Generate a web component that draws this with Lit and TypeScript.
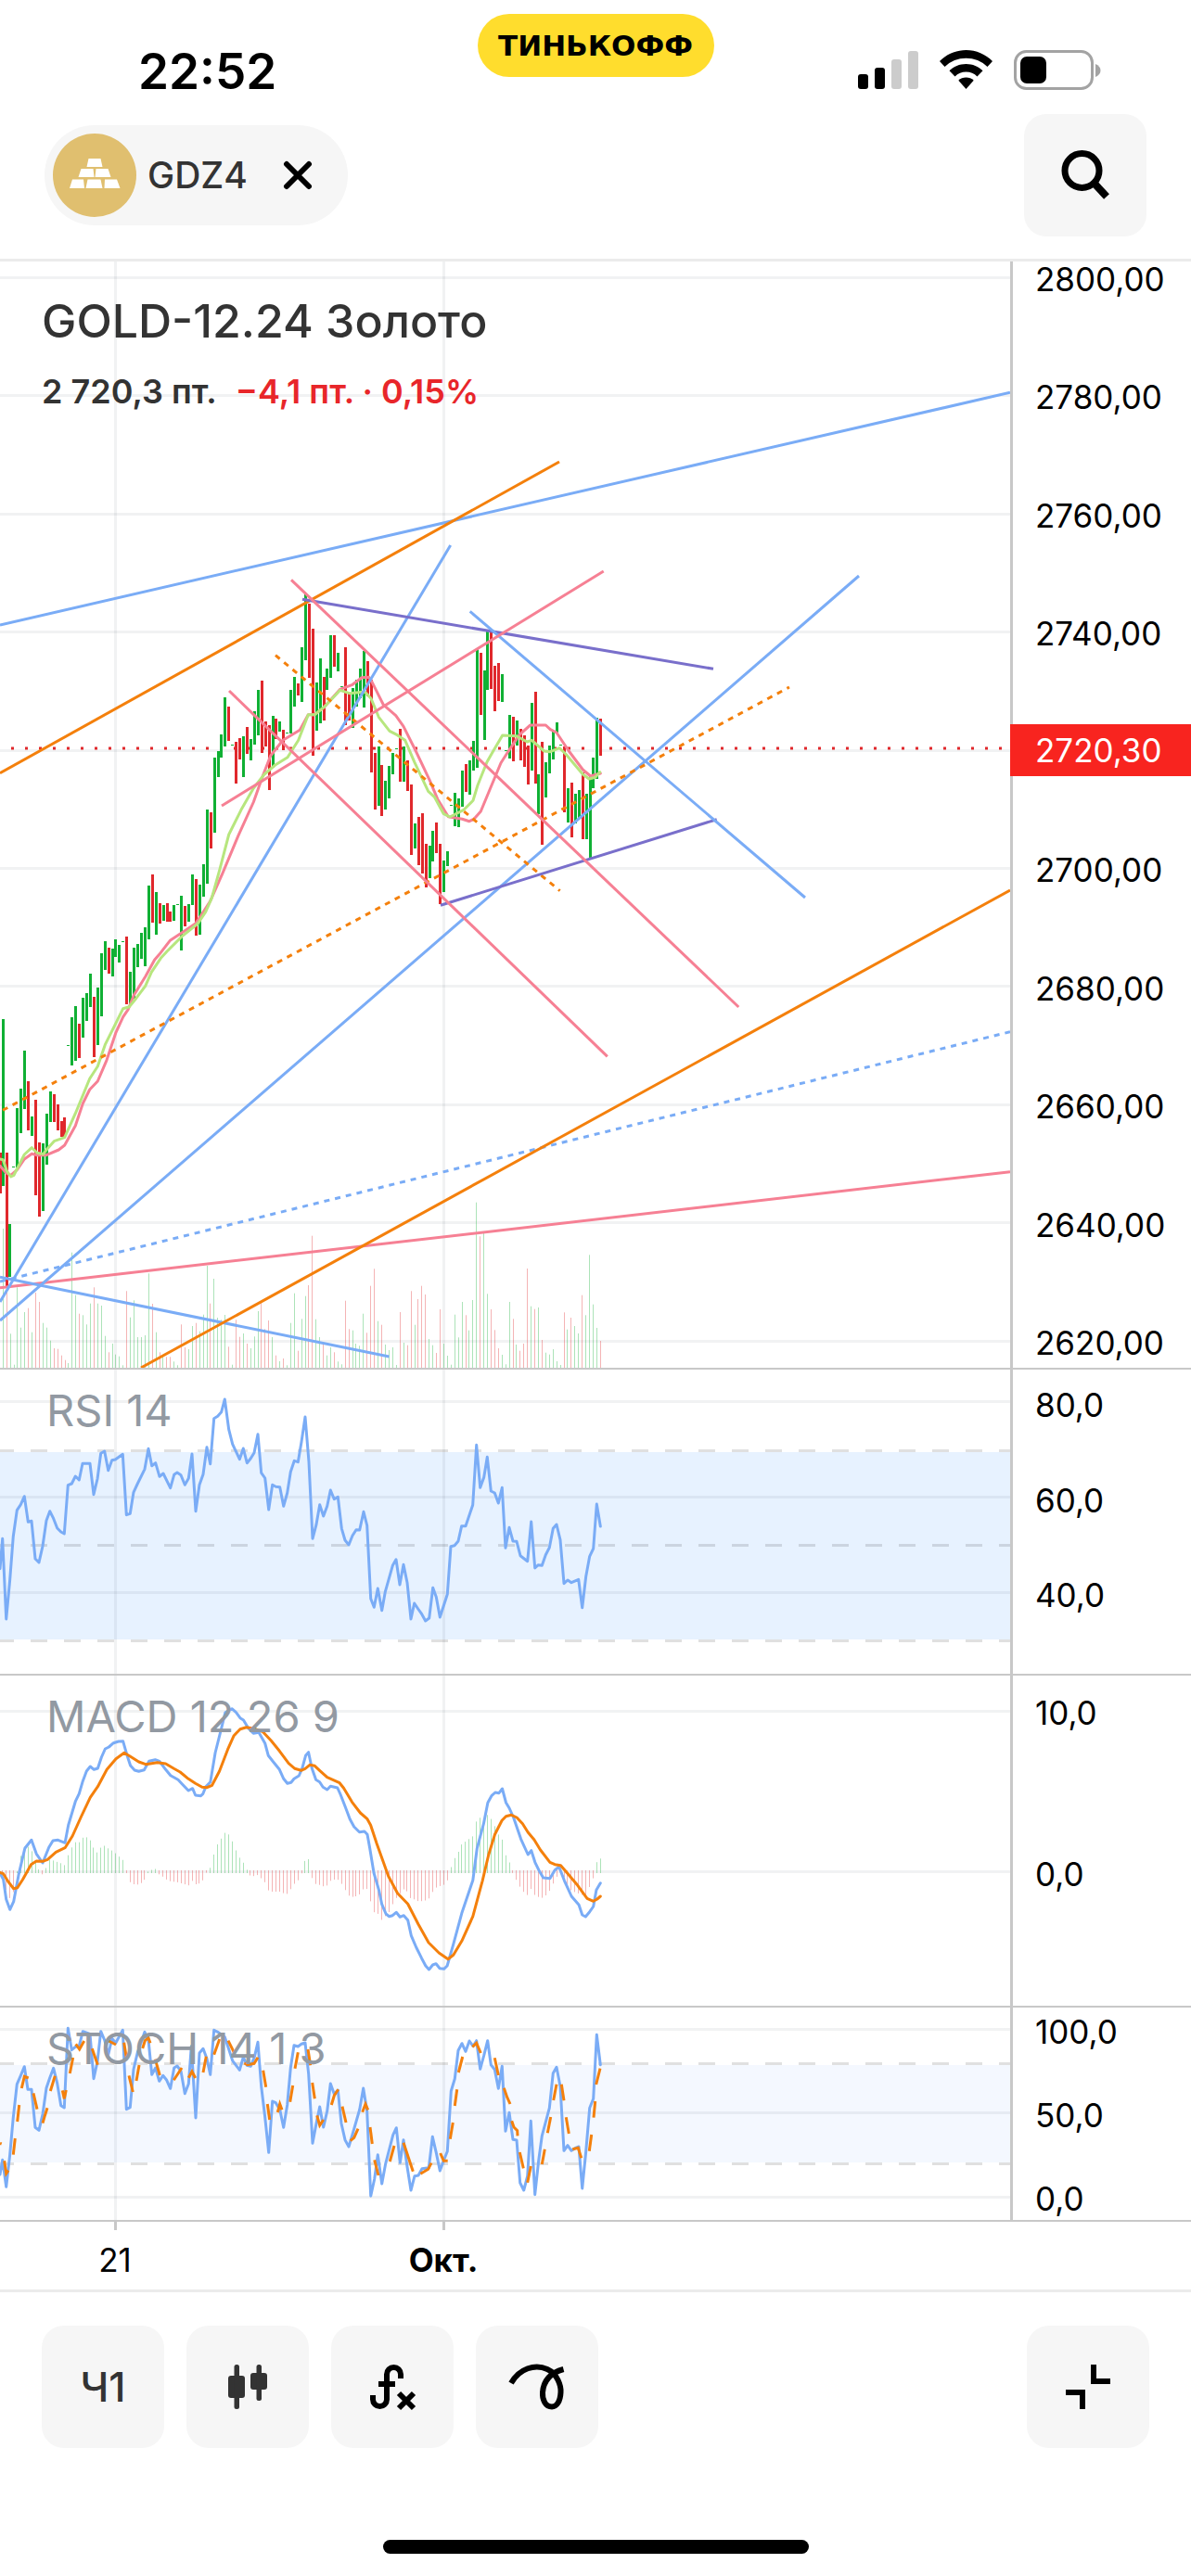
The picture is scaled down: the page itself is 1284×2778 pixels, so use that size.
import { LitElement, html, svg, css } from "lit";
import { customElement } from "lit/decorators.js";

/** Maps digitised samples of a chart section to plot coordinates. */
interface Frame {
  x: number;
  y: number;
  kx: number;
  ky: number;
}

const T = 1 / 3;
const PRICE_LOW: Frame = { x: 0, y: 1020, kx: T, ky: T };
const PRICE_LEFT: Frame = { x: 0, y: 580, kx: T, ky: T };
const PRICE_RIGHT: Frame = { x: 400, y: 580, kx: T, ky: T };
const RSI_LEFT: Frame = { x: 0, y: 1470, kx: T, ky: T };
const RSI_RIGHT: Frame = { x: 380, y: 1470, kx: T, ky: T };
const MACD: Frame = { x: 0, y: 1800, kx: 1 / 2.24, ky: T };
const STOCH_LEFT: Frame = { x: 0, y: 2150, kx: T, ky: T };
const STOCH_RIGHT: Frame = { x: 330, y: 2150, kx: T, ky: T };

/** Centre of the pixel column that holds x, so that thin bars stay crisp. */
const column = (x: number): number => Math.round(x - 0.5) + 0.5;

const points = (data: string, f: Frame): string =>
  data
    .trim()
    .split(/[\s,]+/)
    .map(Number)
    .reduce<string[]>((out, v, i, all) => {
      if (i % 2) {
        const x = f.x + all[i - 1] * f.kx;
        const y = f.y + v * f.ky;
        out.push(`${x.toFixed(1)},${y.toFixed(1)}`);
      }
      return out;
    }, [])
    .join(" ");

/** Each candle is "u|d|t x high low"; t is a flat tick with no range. */
const CANDLES: [Frame, string][] = [
  [
    PRICE_LOW,
    `d 0 668 800,u 10 236 776,d 22 668 1100,u 31 900 1071,t 43 715,u 55 525 718,u 67 462 607,u 79 338 527,
    d 91 438 597,u 103 551 616,d 115 498 806,d 127 636 875,u 139 640 857,u 151 543 707,u 163 471 570,d 175 480 570,
    d 187 513 597,d 199 566 617,d 208 555 617,t 220 322,u 232 230 386,u 244 194 371,d 256 251 362,u 268 168 296,
    u 280 152 242,u 292 90 197,d 304 165 359,u 316 135 320,u 328 25 227,u 340 -16 79,d 352 5 90,u 364 10 100,
    u 373 -22 35,u 385 -2 55,t 397 -15,d 409 -31 190,u 421 84 190,u 433 5 170,u 445 -6 70,u 457 -43 42,u 469 -61 65`,
  ],
  [
    PRICE_LEFT,
    `u 481 1124 1298,d 493 1090 1244,u 505 1145 1285,d 517 1181 1248,u 529 1187 1238,d 541 1181 1242,d 550 1208 1242,
    u 562 1187 1238,t 574 1186,u 586 1157 1334,d 598 1190 1258,u 610 1184 1242,u 622 1088 1187,d 634 1103 1286,
    u 646 1121 1285,u 658 1055 1162,u 670 878 1120,d 682 887 1006,u 694 710 955,u 706 689 774,u 715 635 711,
    u 727 517 675,d 739 545 658,t 751 668,d 763 661 796,d 775 647 717,u 787 643 774,d 799 613 699,u 811 652 720,
    u 823 560 670,u 835 493 640,d 847 463 696,d 859 593 676,d 871 605 816,u 883 577 745,d 892 584 650,u 904 593 627,
    d 916 620 687,t 928 629,u 940 493 633,u 952 449 546,d 964 472 511,u 976 355 531,u 988 182 396,d 1000 213 454,
    d 1012 295 705,u 1024 467 625,u 1036 389 601,d 1048 451 592,u 1057 424 492,u 1069 316 454,d 1081 316 417,
    u 1093 373 432,t 1105 480,d 1117 355 606,d 1129 505 590,u 1141 485 614,u 1153 460 545,u 1165 424 520,
    u 1177 365 549,d 1189 398 513,d 1201 460 759,d 1213 697 880,u 1225 675 868,d 1234 735 900,u 1246 785 880,
    u 1258 738 844`,
  ],
  [
    PRICE_RIGHT,
    `u 70 695 765,t 82 681,d 94 617 790,u 106 675 790,d 118 719 820,d 130 798 1026,u 142 923 1006,d 154 902 1060,
    d 166 890 1087,d 178 989 1132,u 190 997 1102,u 199 947 1047,d 211 920 1020,d 223 989 1185,u 235 1043 1145,
    u 247 1013 1063,t 259 864,u 271 826 934,u 283 842 937,u 295 752 870,d 307 731 823,u 319 719 832,u 331 656 754,
    u 343 357 745,d 355 373 572,u 367 430 655,u 376 300 492,d 388 304 490,d 400 415 562,d 412 406 529,u 424 442 532,
    t 436 686,u 448 572 713,d 460 580 724,u 472 590 672,d 484 619 720,d 496 640 741,d 508 671 799,u 520 535 754,
    d 532 499 796,u 541 765 895,d 553 661 992,u 565 725 841,u 577 671 763,u 589 628 717,u 601 596 632,t 613 669,
    d 625 675 889,u 637 809 922,d 649 791 970,u 661 827 925,u 673 815 910,d 685 760 974,u 697 829 974,u 709 770 1037,
    u 718 710 810,u 730 581 781,d 742 584 706`,
  ],
];

const candlePath = (kind: string): string =>
  CANDLES.map(([f, data]) =>
    data
      .split(",")
      .map((row) => row.trim().split(" "))
      .filter((row) => row[0] === kind)
      .map(([, x, a, b]) => {
        const px = column(f.x + Number(x) * f.kx);
        const top = Math.round(f.y + Number(a) * f.ky);
        if (kind === "t") return `M${px} ${top + 0.5}m-1.5 0h3`;
        return `M${px} ${top}V${Math.round(f.y + Number(b) * f.ky)}`;
      })
      .join("")
  ).join("");

/** Volume bar tops, positive for rising hours and negative for falling ones. */
const VOLUME: [number, number, number[]][] = [
  [
    3.3,
    419.3,
    [
      915, -1100, 1255, 1355, 1105, 1235, 1185, -1172, 1250, -1122, -1152, 1220, 1235, 1277, -1302, -1304, -1325,
      -1340, 1350, 992, 1130, -1190, 1195, 1225, 1157, -1105, 1157, 1164, 1262, -1315, 1287, 1322, 1328, 1357, -1117,
      1202, 1147, 1266, 1266, 1260, 1060, -1158, 1250, -1315, 1328, -1330, -1330, 1345, 1357, -1225, -1299, 1305,
      1230, -1220, 1247, 1193, 1035, -1157, 1077, 1203, 1210, 1194, -1297, 1355, -1210, -1265, 1254, -1287, 1302,
      1264, 1182, -1155, -1240, -1212, 1266, -1325, 1344, -1335, 1357, 1220, 1124, -1310, 1207, 1133, -1098, -938,
      1208, 1266, -1290, 1325, 1299, -1315, 1345, 1354, -1148, -1240, 1244, 1287, 1294, 1190, -1252, -1100, -1045,
      1214, -1226, 1290, 1308,
    ],
  ],
  [
    423.5,
    647.3,
    [
      1299, 1356, -1185, 1284, -1292, -1117, 1226, -1143, -1100, -1128, 1272, 1292, -1317, -1176, 1287, 1326, 1355,
      1193, 1267, 1152, -1195, 1244, 1146, 830, -940, 930, 1126, -1176, -1243, -1302, 1323, 1354, 1152, -1207, 1290,
      -1310, -1287, -1044, 1166, -1175, 1170, -1275, 1316, 1322, 1305, 1344, 1356, -1186, 1241, -1203, 1230, 1254,
      -1130, 1195, 1000, 1160, 1236, -1278,
    ],
  ],
];

const volumePath = (sign: number): string =>
  VOLUME.map(([from, to, tops]) =>
    tops
      .map((v, i) => {
        if (Math.sign(v) !== sign) return "";
        const x = from + ((to - from) * i) / (tops.length - 1);
        return `M${column(x)} 1475V${(1020 + Math.abs(v) / 3).toFixed(1)}`;
      })
      .join("")
  ).join("");

/** Histogram envelope around the zero line. */
const HISTOGRAM = `5 670,15 715,24 742,33 720,41 655,45 640,52 590,60 572,68 575,77 590,86 630,95 650,104 666,113 640,122 612,
  130 620,147 628,157 635,165 600,174 575,182 560,192 560,200 545,210 544,218 555,227 580,236 595,245 575,254 571,263 582,
  272 588,280 597,288 607,297 618,306 663,315 692,325 697,335 697,345 688,352 678,360 648,370 650,378 645,386 668,397 673,
  405 685,430 690,456 700,465 683,475 700,485 690,493 680,501 652,510 640,518 592,527 562,535 547,544 528,552 535,561 558,
  570 588,579 612,588 628,597 652,605 668,615 670,625 665,633 680,642 692,650 720,680 720,690 732,700 715,710 695,720 682,
  729 658,738 615,746 615,755 680,763 695,772 698,780 703,790 700,800 682,815 680,825 695,835 718,845 738,860 735,870 728,
  880 708,888 712,896 755,905 790,915 792,922 812,930 800,940 785,950 755,958 738,966 725,975 712,985 720,993 743,1002 745,
  1012 752,1030 748,1038 740,1046 718,1055 705,1073 697,1082 680,1090 635,1100 605,1108 588,1117 563,1126 557,1135 548,
  1143 540,1152 485,1161 480,1170 485,1178 470,1187 487,1196 512,1205 540,1213 553,1222 608,1231 628,1240 665,1249 685,
  1258 708,1266 722,1275 732,1284 708,1293 735,1310 740,1320 730,1328 715,1337 690,1345 670,1354 658,1363 675,1372 700,
  1381 718,1390 722,1415 735,1425 700,1433 675,1441 625,1450 613`
  .split(",")
  .map((p) => p.trim().split(" ").map(Number));

const histogramPath = (rising: boolean): string => {
  let d = "";
  let k = 0;
  for (let i = 0; i < 165; i++) {
    const x = 6 + i * 8.805;
    while (k < HISTOGRAM.length - 2 && HISTOGRAM[k + 1][0] < x) k++;
    const [xa, ya] = HISTOGRAM[k];
    const [xb, yb] = HISTOGRAM[k + 1];
    const y = ya + ((yb - ya) * (x - xa)) / (xb - xa);
    if (y < 656 !== rising) continue;
    d += `M${column(x / 2.24)} ${rising ? 2020 : 2017}V${(1800 + y / 3).toFixed(1)}`;
  }
  return d;
};

const SLOW_AVERAGE = [
  points(
    `0 712,20 735,35 742,55 725,79 690,103 673,120 677,150 677,190 660,209 645,244 582,268 510,290 465,316 438,345 370,
    375 280,398 230,415 205,433 160,470 100,500 45`,
    PRICE_LOW
  ),
  points(
    `515 1348,550 1303,600 1270,632 1248,650 1222,680 1175,720 1085,770 965,820 855,850 770,875 705,915 655,970 622,
    997 572,1018 572,1048 548,1100 490,1140 475,1170 452,1193 451,1200 460,1215 490,1240 540,1280 575`,
    PRICE_LEFT
  ),
  points(
    `105 610,145 690,190 785,215 845,250 902,295 910,318 917,333 910,355 885,420 728,440 697,480 637,515 606,565 606,
    580 620,600 630,640 690,685 750,710 771,742 762`,
    PRICE_RIGHT
  ),
].join(" ");

const FAST_AVERAGE = [
  points(
    `0 690,10 692,22 728,35 747,45 742,79 675,103 653,120 670,140 674,150 660,175 632,209 620,244 542,290 430,316 390,
    340 320,370 260,398 203,418 197,440 170,470 130,490 85,520 40`,
    PRICE_LOW
  ),
  points(
    `540 1338,590 1288,640 1248,665 1210,685 1165,710 1075,740 960,780 880,820 810,855 765,890 735,930 710,965 655,
    997 572,1018 572,1048 548,1100 493,1130 503,1180 498,1200 520,1225 580,1260 625`,
    PRICE_LEFT
  ),
  points(
    `85 638,110 655,140 725,185 820,205 838,235 893,255 903,300 880,330 850,345 800,375 725,395 690,425 639,470 641,
    505 660,520 655,560 690,580 692,610 680,630 700,685 765,705 780,725 775,740 758`,
    PRICE_RIGHT
  ),
].join(" ");

const RSI_LINE = [
  points(
    `0 665,8 568,20 828,32 700,43 560,55 476,67 458,79 431,91 514,102 511,114 633,126 645,138 592,150 509,161 479,
    173 503,185 534,197 546,208 552,220 395,232 390,244 366,256 378,267 325,291 325,303 425,315 375,326 292,338 285,
    350 347,362 314,373 312,397 295,409 491,421 487,432 418,445 390,468 343,480 277,491 332,503 323,516 367,528 357,
    551 404,563 361,573 354,585 362,598 394,610 373,621 294,633 479,645 394,657 360,669 272,680 326,692 179,704 172,
    716 158,727 117,740 215,752 262,775 311,787 276,799 323,811 308,822 290,834 230,845 355,857 372,869 474,881 394,
    892 400,905 401,917 463,929 420,940 352,952 316,964 320,975 255,987 174,999 320,1011 568,1023 522,1034 458,
    1046 495,1058 463,1069 411,1081 440,1093 433,1105 535,1116 573,1128 588,1140 558,1152 539,1163 540,1176 481,
    1187 525,1199 762`,
    RSI_LEFT
  ),
  points(
    `70 790,82 729,95 800,106 740,130 655,141 635,153 717,165 652,177 710,189 828,200 777,212 795,224 812,236 834,
    248 825,260 727,271 757,283 822,307 748,318 593,330 590,342 576,353 527,366 527,389 459,401 265,413 403,425 370,
    436 304,448 414,460 420,472 453,484 403,495 598,507 532,519 576,531 577,543 623,566 641,578 513,590 663,601 653,
    613 655,625 620,637 597,649 535,660 522,672 572,684 713,696 702,708 710,731 700,743 791,755 690,767 625,779 600,
    790 456,802 528`,
    RSI_RIGHT
  ),
].join(" ");

const MACD_LINE = points(
  `0 660,8 680,15 745,24 778,33 752,45 665,60 580,76 553,88 598,103 627,118 577,128 555,140 553,157 562,165 505,182 428,
  191 403,200 362,209 330,218 315,227 325,236 321,245 285,254 258,263 252,274 239,286 234,297 233,306 275,315 312,
  325 327,335 331,348 326,360 298,375 293,385 298,400 325,412 344,430 358,440 372,455 393,465 386,472 408,485 410,
  490 404,497 380,508 365,520 270,535 190,544 140,560 128,570 140,580 158,588 165,600 192,612 208,625 205,640 240,
  648 280,660 300,675 325,685 355,694 370,703 367,710 355,722 345,730 320,738 280,745 269,753 320,763 358,772 365,
  780 382,790 390,798 379,815 384,822 405,835 450,845 485,855 510,868 527,880 525,887 535,893 580,903 660,915 715,
  922 760,932 792,940 800,948 797,957 787,966 802,975 797,985 812,993 862,1005 900,1018 935,1028 960,1036 972,1045 957,
  1053 953,1062 968,1072 970,1080 960,1095 890,1115 790,1142 683,1152 580,1168 500,1178 432,1187 410,1196 399,1205 401,
  1213 387,1222 432,1230 450,1240 480,1258 550,1275 600,1283 587,1292 625,1303 655,1312 675,1328 677,1340 650,1350 640,
  1363 685,1380 735,1398 763,1406 795,1414 801,1424 785,1433 768,1440 715,1450 692`,
  MACD
);

const SIGNAL_LINE = points(
  `0 658,8 662,20 688,33 710,42 707,55 680,75 632,88 621,103 622,115 616,135 592,157 578,175 540,195 480,218 415,236 380,
  258 325,280 290,300 271,315 283,335 300,352 308,380 302,400 306,420 322,435 333,455 355,472 370,488 382,500 383,
  512 376,530 330,550 260,565 215,580 194,595 188,615 193,635 203,655 232,675 265,697 305,712 322,727 328,737 322,
  748 310,760 313,772 328,790 350,820 368,830 385,850 430,870 465,887 485,895 505,910 565,938 670,960 725,985 760,
  1010 825,1035 885,1060 918,1082 938,1095 925,1115 880,1142 800,1165 685,1180 600,1195 535,1212 490,1222 476,
  1235 472,1248 480,1262 500,1275 528,1290 552,1305 585,1328 625,1340 632,1354 635,1370 660,1395 700,1418 742,
  1433 751,1442 744,1450 735`,
  MACD
);

const STOCH_LINE = [
  points(
    `0 585,8 538,20 625,32 520,43 400,55 293,67 265,79 236,90 310,102 310,114 433,126 442,138 390,150 305,161 272,
    173 241,185 290,197 362,208 369,220 112,232 182,244 172,256 170,268 122,291 130,303 275,315 220,326 122,338 150,
    350 198,362 145,374 160,397 118,409 374,421 368,432 245,445 190,468 124,480 150,491 262,503 240,515 283,527 265,
    539 280,551 307,563 240,573 234,585 250,598 323,610 292,619 170,633 402,645 192,657 178,669 210,680 262,692 118,
    704 124,727 140,740 180,752 217,775 247,787 205,799 232,811 235,823 205,834 157,845 300,857 400,869 514,881 348,
    892 353,905 375,917 433,929 360,940 240,951 167,964 171,975 163,987 159,998 260,1011 484,1023 420,1034 366,
    1046 432,1058 380`,
    STOCH_LEFT
  ),
  points(
    `79 291,91 325,103 312,114 420,126 473,138 495,150 455,173 375,185 306,197 380,209 655,221 600,232 521,245 615,
    257 550,281 457,292 434,304 547,315 473,327 560,339 636,351 590,363 588,375 566,397 563,409 463,421 515,433 573,
    445 540,457 510,469 315,481 275,492 184,504 161,516 187,528 153,540 170,551 152,563 244,575 200,587 152,598 230,
    610 245,622 307,634 235,645 445,657 385,669 472,681 474,692 612,704 636,716 590,727 412,740 650,752 540,763 460,
    775 415,787 370,799 257,810 238,822 300,834 508,846 491,858 508,870 500,882 495,893 630,905 510,917 370,929 340,
    940 133,952 230`,
    STOCH_RIGHT
  ),
].join(" ");

const STOCH_DASHES: string[] = [
  ...`0 484 5 486|14 541 20 582 27 572|43 521 49 468|56 414 62 360|70 306 79 268 92 273|108 322 120 374|
  138 419 145 395 153 370|163 315 178 266|202 313 208 340 214 312|226 258 236 207|245 163 257 180 272 153|298 178 316 230|
  346 150 375 165|401 158 409 208|417 265 430 318|441 282 450 231|461 177 469 152 480 143 486 160|502 212 517 264|
  562 280 588 240|610 272 621 252 632 273|657 255 667 203|692 197 710 147|738 152 757 190|790 225 800 230 822 226 834 206|
  851 248 860 302|865 357 872 408|898 384 905 357 912 376|938 350 947 297|954 242 964 190|996 180 1004 232|
  1010 288 1018 340|1025 394 1034 426 1046 408`
    .split("|")
    .map((s) => points(s, STOCH_LEFT)),
  ...`82 360 91 330 104 310|117 365 129 417|143 476 155 466 168 437|182 383 192 357 200 376|207 432 214 486|
  221 538 234 588|271 543 285 492|315 482 346 575|370 583 395 568 405 548|434 516 445 541 458 541|466 470 475 417|
  481 363 488 310|493 255 506 204|538 172 551 160 565 192|610 208 622 264|640 305 650 335 660 357|
  665 412 672 432 683 443 684 460|691 513 703 565|716 611 727 558|763 552 772 503|781 451 791 399|800 345 810 293|
  826 293 834 346|841 400 850 453|862 503 880 499 890 532|916 509 923 456|930 401 935 348|938 294 951 242`
    .split("|")
    .map((s) => points(s, STOCH_RIGHT)),
];

/** Lines drawn by hand over the chart: class, x1, y1, x2, y2. */
const TRENDS: [string, number, number, number, number][] = [
  ["rose", 0, 1388.7, 1089, 1263.7],
  ["sky dots", 0, 1382, 1089, 1112.7],
  ["sky", 0, 1377.3, 419.5, 1463],
  ["sky", 0, 1404, 485.7, 588],
  ["sky", 0, 1424, 926, 621],
  ["sky", 0, 674, 1089, 423.3],
  ["orange", 152, 1475, 1089, 960],
  ["orange", 0, 833.7, 603, 498],
  ["orange dots", 3, 1197.3, 851, 741],
  ["orange dots", 297, 706.7, 603.7, 960.7],
  ["violet", 326, 646.3, 769, 721.3],
  ["violet", 475, 976.3, 772.7, 883.7],
  ["sky", 506.7, 659.3, 868, 968],
  ["rose", 314, 625.3, 796.3, 1086],
  ["rose", 247, 745, 654.8, 1139.3],
  ["rose", 239, 869, 650.7, 616],
];

const gridLines = (top: number, bottom: number, levels: number[]) => svg`
  <path class="grid" d=${[124.5, 478.5].map((x) => `M${x} ${top}V${bottom}`).join("")} />
  <path class="grid" d=${levels.map((y) => `M0 ${y}H1089`).join("")} />`;

const dashedLevels = (levels: number[]) => svg`
  <path class="level" d=${levels.map((y) => `M-3 ${y}H1089`).join("")} />`;

@customElement("status-bar")
export class StatusBar extends LitElement {
  static styles = css`
    :host {
      display: grid;
      grid-template-columns: 1fr auto 1fr;
      align-items: start;
      height: 108px;
      color: #000;
    }
    .time {
      margin: 49px 0 0 149px;
      font-size: 53px;
      line-height: 56px;
      font-weight: 600;
    }
    .brand {
      margin-top: 15px;
      width: 255px;
      box-sizing: border-box;
      border-radius: 35px;
      background: #ffdd2d;
      text-align: center;
      font: 700 31px/68px "DejaVu Sans", sans-serif;
    }
    .signals {
      display: flex;
      justify-content: flex-end;
      margin: 52px 94px 0 0;
    }
  `;
  render() {
    return html`
      <div class="time">22:52</div>
      <div class="brand">ТИНЬКОФФ</div>
      <div class="signals">
        <svg width="268" height="48" viewBox="922 52 268 48" aria-hidden="true">
          <rect x="925" y="80" width="11" height="16" rx="3" />
          <rect x="943" y="73" width="11" height="23" rx="3" />
          <rect x="961" y="64" width="11" height="32" rx="3" fill="#ccc" />
          <rect x="979" y="55" width="11" height="41" rx="3" fill="#ccc" />
          <path d="M1041.500 54c11 0 21 4.500 28.500 12l-5.500 6a33 33 0 0 0-46 0l-5.500-6c7.500-7.500 17.500-12 28.500-12z" />
          <path d="M1041.500 69c7 0 13.500 2.800 18 7.300l-6 6.200a17 17 0 0 0-24 0l-6-6.200c4.500-4.500 11-7.300 18-7.300z" />
          <path d="M1041.500 83.500c3.200 0 6 1.200 8.200 3.200l-8.200 9.300-8.200-9.300c2.200-2 5-3.200 8.200-3.200z" />
          <rect x="1094.500" y="55.500" width="83" height="40" rx="12" fill="none" stroke="#a3a3a3" stroke-width="3" />
          <rect x="1100" y="61" width="28" height="29" rx="7" />
          <path d="M1181 69c3.500 1.500 5.500 4 5.500 7s-2 5.500-5.500 7z" fill="#a3a3a3" />
        </svg>
      </div>
    `;
  }
}

@customElement("icon-button")
export class IconButton extends LitElement {
  static properties = { label: {} };
  declare label: string;
  static styles = css`
    :host {
      display: block;
    }
    .button {
      display: flex;
      align-items: center;
      justify-content: center;
      width: 132px;
      height: 132px;
      padding: 0;
      border: 0;
      border-radius: 24px;
      background: #f6f6f6;
      color: #333;
      font: 500 44px/48px Inter, sans-serif;
      cursor: pointer;
    }
  `;
  render() {
    return html`<button class="button" type="button" aria-label=${this.label}><slot></slot></button>`;
  }
}

@customElement("chart-pane")
export class ChartPane extends LitElement {
  static styles = css`
    :host {
      display: grid;
      grid-template-columns: 1089fr 195fr;
    }
    .plot {
      display: grid;
      min-width: 0;
      border-bottom: 2px solid #c8c8c8;
    }
    .plot ::slotted(*) {
      grid-area: 1 / 1;
      min-width: 0;
    }
    .scale {
      display: flex;
      border-left: 3px solid #c8c8c8;
      border-bottom: 2px solid #c8c8c8;
    }
  `;
  render() {
    return html`
      <div class="plot"><slot></slot></div>
      <div class="scale"><slot name="scale"></slot></div>
    `;
  }
}

@customElement("app-root")
export class AppRoot extends LitElement {
  static styles = css`
    :host {
      display: flex;
      flex-direction: column;
      min-height: 100vh;
      background: #fff;
      color: #333;
      font-family: Inter, "Noto Sans", sans-serif;
    }
    .header {
      display: flex;
      align-items: center;
      justify-content: space-between;
      padding: 15px 48px 24px;
      border-bottom: 3px solid #ebebeb;
    }
    .chip {
      display: flex;
      align-items: center;
      gap: 12px;
      padding: 9px 38px 9px 9px;
      border-radius: 54px;
      background: #f6f6f6;
      font-size: 39px;
      line-height: 44px;
      font-weight: 500;
    }
    .close {
      display: flex;
      margin-left: 26px;
      padding: 0;
      border: 0;
      background: none;
      cursor: pointer;
    }
    .drawing {
      display: block;
      width: 100%;
      height: auto;
    }
    .drawing path,
    .drawing polyline,
    .drawing line {
      fill: none;
    }
    .grid {
      stroke: rgba(20, 40, 50, 0.06);
      stroke-width: 3;
    }
    .level {
      stroke: rgba(0, 0, 0, 0.12);
      stroke-width: 3;
      stroke-dasharray: 18 18;
    }
    .last {
      stroke: #e0282c;
      stroke-width: 3;
      stroke-dasharray: 3 12;
    }
    .up {
      stroke: #10b034;
      stroke-width: 3;
    }
    .down {
      stroke: #e0282c;
      stroke-width: 3;
    }
    .tick {
      stroke: #10b034;
      stroke-width: 1;
    }
    .thin {
      stroke-width: 1;
      opacity: 0.35;
    }
    .curve {
      stroke-width: 3;
      stroke-linejoin: round;
      stroke-linecap: round;
    }
    .sky {
      stroke: #7aacf6;
      stroke-width: 3;
    }
    .orange {
      stroke: #f4800c;
      stroke-width: 3;
    }
    .rose {
      stroke: #f68094;
      stroke-width: 3;
    }
    .lime {
      stroke: #b7e67e;
      stroke-width: 3;
    }
    .violet {
      stroke: #796fcb;
      stroke-width: 3;
    }
    .dots {
      stroke-dasharray: 6 6;
    }
    .summary {
      padding: 34px 45px;
      display: flex;
      flex-direction: column;
      gap: 24px;
    }
    .name {
      margin: 0;
      font-size: 50px;
      line-height: 60px;
      font-weight: 500;
    }
    .quote {
      display: flex;
      gap: 20px;
      margin: 0;
      font-size: 36px;
      line-height: 44px;
      font-weight: 600;
    }
    .change {
      color: #e8262a;
    }
    .indicator {
      margin: 0;
      padding: 16px 50px;
      color: #9299a2;
      font-size: 47px;
      line-height: 56px;
      font-weight: 400;
    }
    .labels {
      display: flex;
      flex-direction: column;
      flex: 1;
      min-width: 0;
      justify-content: space-between;
      margin: 0;
      padding: 0;
      list-style: none;
      color: #000;
      font-size: 35px;
      line-height: 36px;
    }
    .labels li {
      padding-left: 24px;
    }
    .labels .current {
      margin: -12px 0 -8px -3px;
      padding: 10px 0 10px 27px;
      background: #f8241f;
      color: #fff;
    }
    .for-price {
      padding: 1px 0 9px;
    }
    .for-rsi {
      padding: 20px 0 67px;
    }
    .for-macd {
      padding: 22px 0 124px;
    }
    .for-stoch {
      padding: 8px 0 5px;
    }
    .dates {
      display: grid;
      grid-template-columns: 248fr 460fr 381fr 195fr;
      padding-bottom: 10px;
      border-bottom: 3px solid #ebebeb;
      color: #000;
      font-size: 35px;
      line-height: 44px;
      text-align: center;
    }
    .date::before {
      content: "";
      display: block;
      width: 3px;
      height: 9px;
      margin: 0 auto 10px;
      background: #c8c8c8;
    }
    .month {
      font-weight: 700;
    }
    .toolbar {
      display: flex;
      gap: 24px;
      padding: 36px 45px 0;
    }
    .spacer {
      flex: 1;
    }
    .home {
      width: 459px;
      height: 15px;
      margin: 99px auto 24px;
      border-radius: 8px;
      background: #000;
    }
  `;

  private header() {
    return html`
      <header class="header">
        <div class="chip">
          <svg width="90" height="90" viewBox="57 144 90 90" aria-hidden="true">
            <circle cx="102" cy="189" r="45" fill="#e0bf6f" />
            <path
              fill="#fff"
              d="M95.500 171h13l2 9h-17zM87.500 182h13l1 9H84.500zM103.500 182h13l3 9h-17zM78 193.500h12l1 9.500H75zM94.500 193.500h14l2 9.500h-18zM113 193.500h13l3.500 9.500h-17z"
            />
          </svg>
          <span>GDZ4</span>
          <button class="close" type="button" aria-label="Закрыть">
            <svg width="32" height="32" viewBox="0 0 32 32" aria-hidden="true">
              <path d="M4 4 28 28M28 4 4 28" fill="none" stroke="#000" stroke-width="6" stroke-linecap="round" />
            </svg>
          </button>
        </div>
        <icon-button label="Поиск">
          <svg width="132" height="132" viewBox="0 0 132 132" fill="none" stroke="#000" aria-hidden="true">
            <circle cx="62.500" cy="61" r="18.500" stroke-width="7" />
            <path d="M76 75 89 89" stroke-width="8" />
          </svg>
        </icon-button>
      </header>
    `;
  }

  private pricePane() {
    return html`
      <chart-pane>
        <svg class="drawing" viewBox="0 282 1089 1193" aria-hidden="true">
          ${gridLines(282, 1475, [299.5, 426.5, 554.5, 681.5, 809.5, 936.5, 1063.5, 1191.5, 1318.5, 1446.5])}
          <path class="thin up" d=${volumePath(1)} />
          <path class="thin down" d=${volumePath(-1)} />
          <path class="last" d="M12 807H1089" />
          <path class="up" d=${candlePath("u")} />
          <path class="down" d=${candlePath("d")} />
          <path class="tick" d=${candlePath("t")} />
          <polyline class="curve rose" points=${SLOW_AVERAGE} />
          <polyline class="curve lime" points=${FAST_AVERAGE} />
          ${TRENDS.map(([name, x1, y1, x2, y2]) => svg`<line class=${name} x1=${x1} y1=${y1} x2=${x2} y2=${y2} />`)}
        </svg>
        <div class="summary">
          <h1 class="name">GOLD-12.24 Золото</h1>
          <p class="quote"><span>2 720,3 пт.</span><span class="change">−4,1 пт. · 0,15%</span></p>
        </div>
        <ul class="labels for-price" slot="scale">
          ${["2800,00", "2780,00", "2760,00", "2740,00"].map((v) => html`<li>${v}</li>`)}
          <li class="current">2720,30</li>
          ${["2700,00", "2680,00", "2660,00", "2640,00", "2620,00"].map((v) => html`<li>${v}</li>`)}
        </ul>
      </chart-pane>
    `;
  }

  private rsiPane() {
    return html`
      <chart-pane>
        <svg class="drawing" viewBox="0 1477 1089 328" aria-hidden="true">
          <rect y="1566" width="1089" height="202" fill="#e7f2ff" />
          ${gridLines(1477, 1805, [1511.5, 1614.5, 1717.5])} ${dashedLevels([1564.5, 1666.5, 1769.5])}
          <polyline class="curve sky" points=${RSI_LINE} />
        </svg>
        <h2 class="indicator">RSI 14</h2>
        <ul class="labels for-rsi" slot="scale">
          ${["80,0", "60,0", "40,0"].map((v) => html`<li>${v}</li>`)}
        </ul>
      </chart-pane>
    `;
  }

  private macdPane() {
    return html`
      <chart-pane>
        <svg class="drawing" viewBox="0 1807 1089 356" aria-hidden="true">
          ${gridLines(1807, 2163, [1845.5, 2018.5])}
          <path class="thin up" d=${histogramPath(true)} />
          <path class="thin down" d=${histogramPath(false)} />
          <polyline class="curve sky" points=${MACD_LINE} />
          <polyline class="curve orange" points=${SIGNAL_LINE} />
        </svg>
        <h2 class="indicator">MACD 12 26 9</h2>
        <ul class="labels for-macd" slot="scale">
          ${["10,0", "0,0"].map((v) => html`<li>${v}</li>`)}
        </ul>
      </chart-pane>
    `;
  }

  private stochPane() {
    return html`
      <chart-pane>
        <svg class="drawing" viewBox="0 2165 1089 229" aria-hidden="true">
          <rect y="2227" width="1089" height="105" fill="#f4f8ff" />
          ${gridLines(2165, 2394, [2188.5, 2278.5, 2369.5])} ${dashedLevels([2225.5, 2333.5])}
          <polyline class="curve sky" points=${STOCH_LINE} />
          ${STOCH_DASHES.map((p) => svg`<polyline class="orange" points=${p} />`)}
        </svg>
        <h2 class="indicator">STOCH 14 1 3</h2>
        <ul class="labels for-stoch" slot="scale">
          ${["100,0", "50,0", "0,0"].map((v) => html`<li>${v}</li>`)}
        </ul>
      </chart-pane>
    `;
  }

  private toolbar() {
    return html`
      <nav class="toolbar">
        <icon-button label="Ч1">Ч1</icon-button>
        <icon-button label="Свечи">
          <svg width="132" height="132" viewBox="0 0 132 132" fill="#333" aria-hidden="true">
            <rect x="45" y="54" width="18" height="24" rx="3" />
            <rect x="51.500" y="42" width="5.500" height="48" rx="2.500" />
            <rect x="69" y="51" width="18" height="18" rx="3" />
            <rect x="75.500" y="42" width="5.500" height="39" rx="2.500" />
          </svg>
        </icon-button>
        <icon-button label="Индикаторы">
          <svg width="132" height="132" viewBox="0 0 132 132" fill="none" stroke="#000" stroke-width="6" aria-hidden="true">
            <path d="M45 75v4.500a7.500 7.500 0 0 0 15 0v-27a7.500 7.500 0 0 1 15 0V57M51 63h18M73 73l16 16M89 73l-16 16" />
          </svg>
        </icon-button>
        <icon-button label="Рисование">
          <svg width="132" height="132" viewBox="0 0 132 132" fill="none" stroke="#000" stroke-width="6" aria-hidden="true">
            <path d="M38 62C47 46 64 41 77 47C88 52 92 65 91.500 72C91 82 87 87.500 82 87.500C75 87.500 71.500 80 72 72C73 59 80 51 94.500 47" />
          </svg>
        </icon-button>
        <div class="spacer"></div>
        <icon-button label="Свернуть">
          <svg width="132" height="132" viewBox="0 0 132 132" fill="none" stroke="#000" stroke-width="6" aria-hidden="true">
            <path d="M72 42V60H90M42 72H60V90" />
          </svg>
        </icon-button>
      </nav>
    `;
  }

  render() {
    return html`
      <status-bar></status-bar>
      ${this.header()}
      <main>
        ${this.pricePane()} ${this.rsiPane()} ${this.macdPane()} ${this.stochPane()}
        <div class="dates">
          <span class="date">21</span>
          <span class="date month">Окт.</span>
        </div>
      </main>
      ${this.toolbar()}
      <div class="home"></div>
    `;
  }
}
